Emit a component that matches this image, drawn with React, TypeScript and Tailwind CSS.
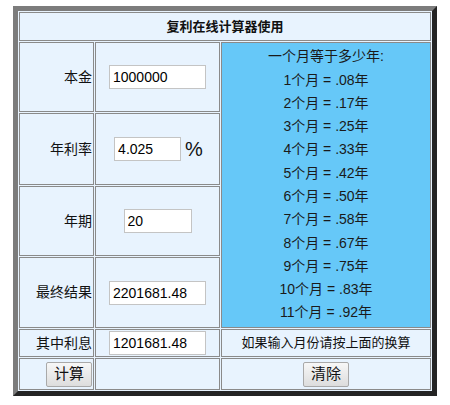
import { useState } from "react";

const months = [
  ".08", ".17", ".25", ".33", ".42", ".50",
  ".58", ".67", ".75", ".83", ".92",
];

const cell = "border border-[#8a8a8a] bg-[#e8f3fe]";
const label = `${cell} flex items-center justify-end pr-[1px] text-[14px]`;
const mid = `${cell} flex items-center justify-center`;
const field =
  "h-[24px] border border-[#c4c4c4] bg-white pl-[3px] text-[14px] text-black outline-none";
const btn =
  "h-[25px] w-[46px] rounded-[2px] border border-[#a9a9a9] bg-gradient-to-b from-[#f7f7f7] to-[#dddddd] text-[15px] text-[#111]";

export default function App() {
  const [principal, setPrincipal] = useState("1000000");
  const [rate, setRate] = useState("4.025");
  const [years, setYears] = useState("20");
  const [total, setTotal] = useState("2201681.48");
  const [interest, setInterest] = useState("1201681.48");

  function calc() {
    const p = parseFloat(principal) || 0;
    const r = (parseFloat(rate) || 0) / 100;
    const n = parseFloat(years) || 0;
    const t = p * Math.pow(1 + r, n);
    setTotal(t.toFixed(2));
    setInterest((t - p).toFixed(2));
  }

  function clear() {
    setPrincipal("");
    setRate("");
    setYears("");
    setTotal("");
    setInterest("");
  }

  return (
    <div className="min-h-[405px] bg-white pl-[13px] pt-[6px] font-['Liberation_Sans','Noto_Sans_CJK_SC',sans-serif] text-[#111]">
      <div className="w-[424px] border-[5px] border-t-[#7c7c7c] border-l-[#7c7c7c] border-r-[#242424] border-b-[#242424] bg-[#e8f3fe]">
        <div className="grid grid-cols-[75px_125px_210px] grid-rows-[29px_70px_72px_70px_71px_28px_32px] gap-px p-px">
          <div className={`${cell} col-span-3 flex items-center justify-center text-[13px] font-bold`}>
            复利在线计算器使用
          </div>

          <div className={label}>本金</div>
          <div className={mid}>
            <input
              className={`${field} w-[97px]`}
              value={principal}
              onChange={(e) => setPrincipal(e.target.value)}
            />
          </div>
          <div className="row-span-4 flex flex-col items-center justify-center border border-[#8a8a8a] bg-[#66c8f8] text-[14px] leading-[23.3px] text-[#1a1a1a]">
            <div>一个月等于多少年:</div>
            {months.map((m, i) => (
              <div key={m}>
                {i + 1}个月 = {m}年
              </div>
            ))}
          </div>

          <div className={label}>年利率</div>
          <div className={`${mid} gap-[4px] pl-[2px]`}>
            <input
              className={`${field} w-[67px]`}
              value={rate}
              onChange={(e) => setRate(e.target.value)}
            />
            <span className="text-[20px] leading-none">%</span>
          </div>

          <div className={label}>年期</div>
          <div className={mid}>
            <input
              className={`${field} w-[68px]`}
              value={years}
              onChange={(e) => setYears(e.target.value)}
            />
          </div>

          <div className={label}>最终结果</div>
          <div className={mid}>
            <input
              className={`${field} w-[97px]`}
              value={total}
              onChange={(e) => setTotal(e.target.value)}
            />
          </div>

          <div className={label}>其中利息</div>
          <div className={mid}>
            <input
              className={`${field} h-[22px] w-[97px]`}
              value={interest}
              onChange={(e) => setInterest(e.target.value)}
            />
          </div>
          <div className={`${cell} flex items-center justify-center text-[13px]`}>
            如果输入月份请按上面的换算
          </div>

          <div className={label}>
            <button onClick={calc} className={btn}>
              计算
            </button>
          </div>
          <div className={cell}></div>
          <div className={mid}>
            <button onClick={clear} className={btn}>
              清除
            </button>
          </div>
        </div>
      </div>
    </div>
  );
}
